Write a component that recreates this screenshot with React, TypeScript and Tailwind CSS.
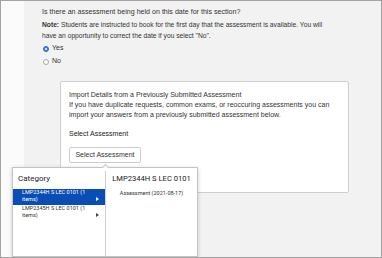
import React from "react";

const categories = [
  { name: "LMP2344H S LEC 0101 (1 items)", active: true },
  { name: "LMP2345H S LEC 0101 (1 items)", active: false },
];

const Caret = ({ white }: { white?: boolean }) => (
  <svg width="3" height="4" viewBox="0 0 3 4" className="shrink-0">
    <path d="M0 0 L3 2 L0 4 Z" fill={white ? "#ffffff" : "#444444"} />
  </svg>
);

const Radio = ({ checked, label }: { checked?: boolean; label: string }) => (
  <label className="flex items-center gap-[3px] h-[13px]">
    <span
      className={
        checked
          ? "w-[6px] h-[6px] rounded-full bg-[#3b82f6] border border-[#2f6fd6] flex items-center justify-center"
          : "w-[6px] h-[6px] rounded-full bg-white border border-[#a8a8a8]"
      }
    >
      {checked && <span className="w-[2px] h-[2px] rounded-full bg-white" />}
    </span>
    <span>{label}</span>
  </label>
);

export default function App() {
  return (
    <div className="relative w-[382px] h-[258px] border border-[#a3a3a3] flex overflow-hidden font-['Liberation_Sans',Arial,sans-serif] text-[#333] text-[7px]">
      <div className="w-[23px] bg-[#fbfbfb]" />
      <div className="flex-1 bg-[#f2f2f2] pl-[18px] pt-[5px]">
        <p className="leading-[12px] text-[7.1px]">Is there an assessment being held on this date for this section?</p>
        <p className="leading-[11px] mt-[1px] text-[6.7px] whitespace-nowrap">
          <span className="font-bold">Note:</span> Students are instructed to book for the first day that the
          assessment is available. You will
          <br />
          have an opportunity to correct the date if you select "No".
        </p>
        <div className="mt-[1px] pl-[1px] flex flex-col">
          <Radio checked label="Yes" />
          <Radio label="No" />
        </div>

        <div className="mt-[13px] ml-[18px] w-[289px] h-[112px] bg-white border border-[#cfcfcf] rounded-[2px] pl-[8px] pt-[8px]">
          <p className="leading-[10px]">Import Details from a Previously Submitted Assessment</p>
          <p className="leading-[10px] w-[270px]">
            If you have duplicate requests, common exams, or reoccuring assessments you can import your answers
            from a previously submitted assessment below.
          </p>
          <p className="mt-[9px] leading-[10px] text-[#222]">Select Assessment</p>
          <button className="mt-[8px] w-[72px] h-[16px] bg-white border border-[#cccccc] rounded-[2px] text-[7px] text-[#333] flex items-center justify-center">
            Select Assessment
          </button>
        </div>
      </div>

      <div className="absolute left-[11px] top-[166px] bottom-0 w-[186px] bg-white border border-[#c4c4c4] shadow-[0_1px_4px_rgba(0,0,0,0.2)] flex font-['Roboto',Arial,sans-serif]">
        <div className="absolute -top-[3px] left-[90px] w-[5px] h-[5px] bg-white border-l border-t border-[#c4c4c4] rotate-45" />
        <div className="w-[93px] border-r border-[#d0d0d0] flex flex-col">
          <div className="h-[21px] flex items-center pl-[5px] text-[8px] text-[#222]">Category</div>
          {categories.map((c) => (
            <div
              key={c.name}
              className={
                c.active
                  ? "h-[16px] bg-[#0a4db4] text-white flex items-end justify-between pl-[9px] pr-[6px] pb-[2px]"
                  : "h-[16px] text-[#333] flex items-end justify-between pl-[9px] pr-[6px] pb-[2px]"
              }
            >
              <span className="text-[5.5px] leading-[7px] w-[70px]">{c.name}</span>
              <span className="mb-[2px]">
                <Caret white={c.active} />
              </span>
            </div>
          ))}
        </div>
        <div className="flex-1 flex flex-col items-center">
          <div className="h-[21px] flex items-center text-[7.6px] text-[#222]">LMP2344H S LEC 0101</div>
          <div className="text-[5.5px] leading-[8px] text-[#333]">Assessment (2021-08-17)</div>
        </div>
      </div>
    </div>
  );
}
